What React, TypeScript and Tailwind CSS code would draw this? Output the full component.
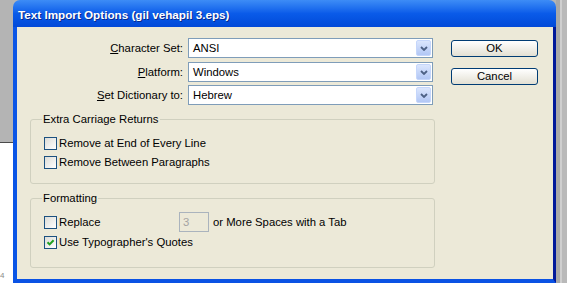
import React from 'react';

const Chevron = () => (
  <svg width="8" height="5" viewBox="0 0 8 5">
    <path d="M1 1 L4 4 L7 1" stroke="#4d6185" strokeWidth="1.8" fill="none" />
  </svg>
);

function Select({ value }: { value: string }) {
  return (
    <div className="flex h-5 w-[245px] items-center border border-[#7f9db9] bg-white pl-[4px]">
      <span className="flex-1">{value}</span>
      <div className="mr-px flex h-4 w-[15px] items-center justify-center rounded-[2px] border border-[#c5d6fb] bg-gradient-to-b from-[#dbe6fd] to-[#b2c7f5]">
        <Chevron />
      </div>
    </div>
  );
}

function Row({ hotkey, rest, value, className }: { hotkey: string; rest: string; value: string; className: string }) {
  return (
    <div className={`flex items-center ${className}`}>
      <div className="w-[171px] pr-[5px] text-right">
        <span className="underline decoration-1 underline-offset-1">{hotkey}</span>
        {rest}
      </div>
      <Select value={value} />
    </div>
  );
}

function Checkbox({ checked = false }: { checked?: boolean }) {
  return (
    <div className="flex h-[13px] w-[13px] items-center justify-center border border-[#1c5180] bg-gradient-to-br from-[#dcdcd7] to-white">
      {checked && (
        <svg width="9" height="9" viewBox="0 0 9 9">
          <path d="M1.5 4.2 L3.6 6.4 L7.6 2.2" stroke="#21a121" strokeWidth="2" fill="none" />
        </svg>
      )}
    </div>
  );
}

function XpButton({ label, className }: { label: string; className: string }) {
  return (
    <div className={`flex h-[17px] w-[87px] items-center justify-center rounded-[3px] border border-[#003c74] bg-gradient-to-b from-white to-[#e3e0d3] ${className}`}>
      {label}
    </div>
  );
}

export default function App() {
  return (
    <div className="flex h-[283px] w-[567px] overflow-hidden bg-[#b5b5b5] font-['Liberation_Sans',Arial,sans-serif] text-[11.3px] text-black">
      {/* desktop behind, left */}
      <div className="flex w-[13px] flex-col">
        <div className="h-[142px] bg-[#b4b4b4]" />
        <div className="h-px bg-[#4a4a4a]" />
        <div className="flex flex-1 flex-col justify-end bg-white pb-[3px] text-[8px] leading-[8px] text-[#8a8a8a]">4</div>
      </div>

      {/* dialog */}
      <div className="flex w-[543px] flex-col">
        <div className="flex h-[27px] items-center rounded-t-[7px] bg-gradient-to-b from-[#3d8cf6] via-[#0a5be9] to-[#0249d8] pl-[5px] pt-[3px] text-[11.7px] font-bold text-white [text-shadow:1px_1px_#0b2a8c]">
          Text Import Options (gil vehapil 3.eps)
        </div>
        <div className="flex flex-1 border-b-4 border-l-4 border-r-[3px] border-b-[#0a52e4] border-l-[#0a55e6] border-r-[#00189a] bg-[#ece9d8]">
          <div className="flex w-[421px] flex-col">
            <Row className="mt-[11px]" hotkey="C" rest="haracter Set:" value="ANSI" />
            <Row className="mt-1" hotkey="P" rest="latform:" value="Windows" />
            <Row className="mt-[3px]" hotkey="S" rest="et Dictionary to:" value="Hebrew" />

            <fieldset className="ml-[13px] mt-[7px] w-[405px] rounded-[3px] border border-[#d0d0bf] p-0">
              <legend className="ml-[11px] px-px leading-[14px]">Extra Carriage Returns</legend>
              <div className="flex flex-col pb-[11px] pl-[13px] pt-2">
                <div className="flex h-[19px] items-center gap-[2px]">
                  <Checkbox />
                  <span>Remove at End of Every Line</span>
                </div>
                <div className="flex h-[19px] items-center gap-[2px]">
                  <Checkbox />
                  <span>Remove Between Paragraphs</span>
                </div>
              </div>
            </fieldset>

            <fieldset className="ml-[13px] mt-[7px] w-[405px] rounded-[3px] border border-[#d0d0bf] p-0">
              <legend className="ml-[11px] px-px leading-[14px]">Formatting</legend>
              <div className="flex flex-col pb-[15px] pl-[13px] pt-[7px]">
                <div className="flex h-5 items-center">
                  <div className="flex w-[135px] items-center gap-[2px]">
                    <Checkbox />
                    <span>Replace</span>
                  </div>
                  <div className="flex h-5 w-[30px] items-center border border-[#aab3bd] bg-[#ece9d8] pl-[3px] text-[#a3a3a3]">3</div>
                  <span className="ml-1">or More Spaces with a Tab</span>
                </div>
                <div className="flex h-5 items-center gap-[2px]">
                  <Checkbox checked />
                  <span>Use Typographer's Quotes</span>
                </div>
              </div>
            </fieldset>
          </div>

          <div className="ml-[13px] flex flex-col pt-[13px]">
            <XpButton label="OK" className="" />
            <XpButton label="Cancel" className="mt-[11px]" />
          </div>
        </div>
      </div>

      {/* desktop behind, right */}
      <div className="flex flex-1">
        <div className="w-1 bg-[#a8a8a8]" />
        <div className="w-[2px] bg-[#cfcfcf]" />
        <div className="flex-1 bg-[#b9b9b9]" />
      </div>
    </div>
  );
}
